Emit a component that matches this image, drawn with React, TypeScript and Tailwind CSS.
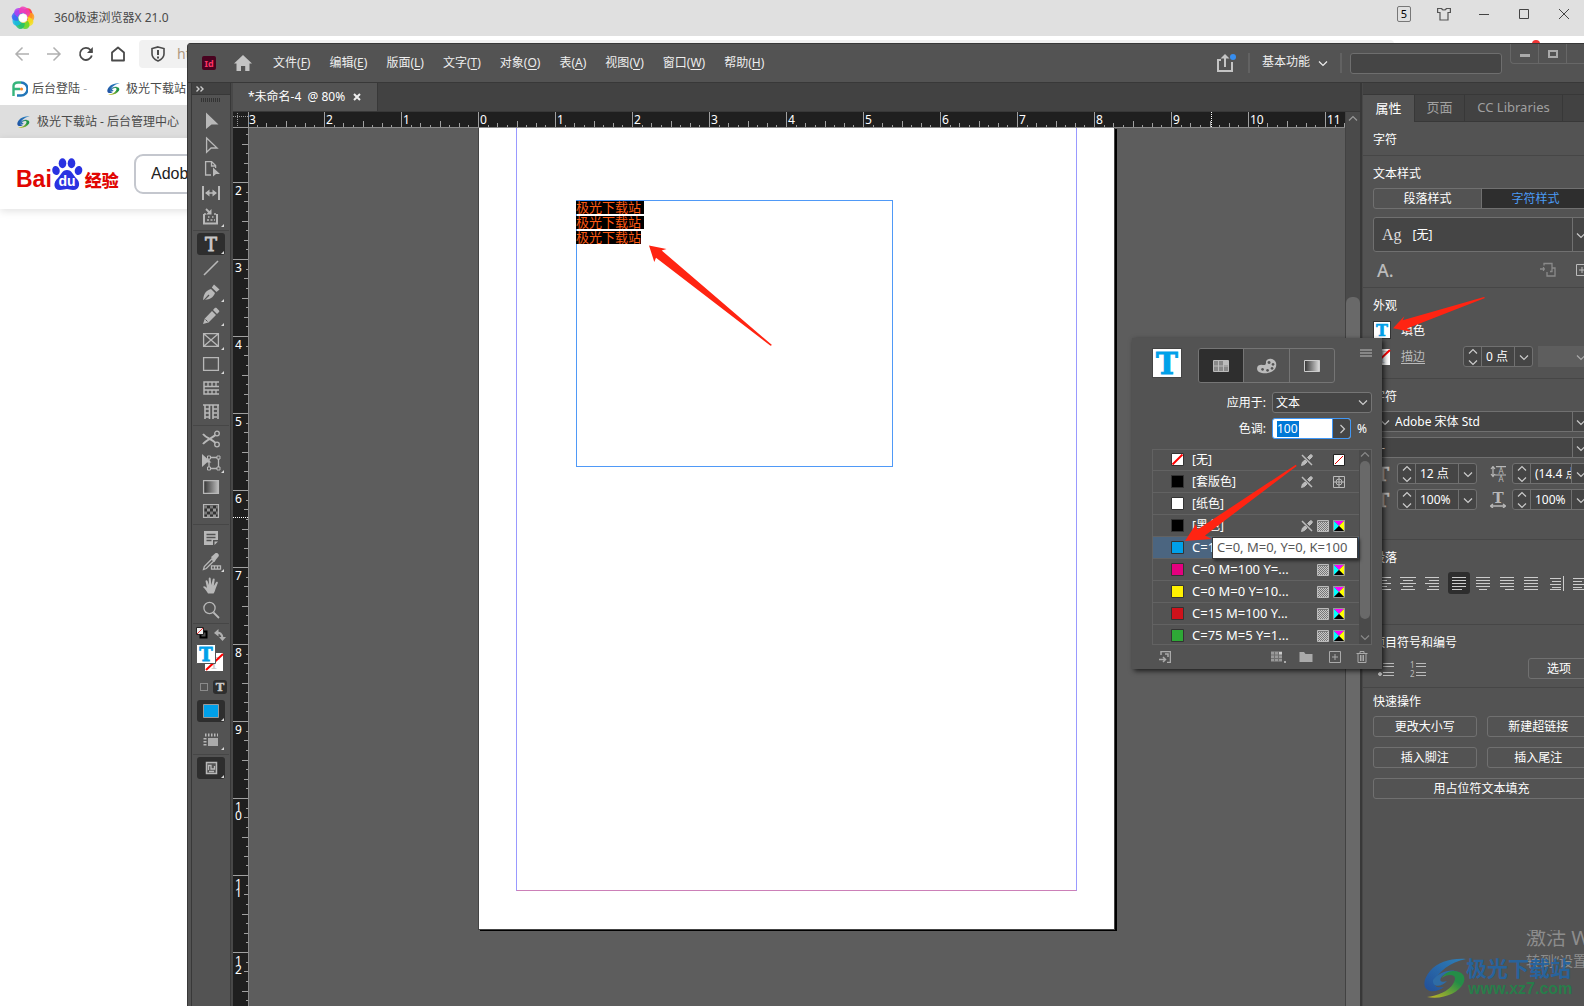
import type { ReactNode } from 'react'

const UNIT = 77

/* ---------- small shared pieces ---------- */

function Chevron({ dir = 'down', className = '' }: { dir?: 'down' | 'up' | 'right'; className?: string }) {
  const d = dir === 'down' ? 'M1 3.5l4 4 4-4' : dir === 'up' ? 'M1 6.5l4-4 4 4' : 'M3.5 1l4 4-4 4'
  return (
    <svg className={`h-[10px] w-[10px] shrink-0 ${className}`} viewBox="0 0 10 10" fill="none" stroke="currentColor" strokeWidth="1.2">
      <path d={d} />
    </svg>
  )
}

function SerifT({ className = '', size = 20, fill = '#b8b8b8' }: { className?: string; size?: number; fill?: string }) {
  return (
    <svg className={className} viewBox="0 0 20 20">
      <text x="10" y={10 + size * 0.365} fontSize={size} textAnchor="middle" fontWeight="bold" fill={fill} stroke={fill} strokeWidth="0.7" fontFamily='"DejaVu Serif", serif'>
        T
      </text>
    </svg>
  )
}

function Aurora({ className = '' }: { className?: string }) {
  return (
    <svg className={className} viewBox="0 0 42 40">
      <defs>
        <linearGradient id="auroraTop" x1="1" y1="0" x2="0" y2="1">
          <stop offset="0" stopColor="#2a86c4" />
          <stop offset="1" stopColor="#1f4fa0" />
        </linearGradient>
        <linearGradient id="auroraBottom" x1="1" y1="0" x2="0" y2="1">
          <stop offset="0.3" stopColor="#1f9446" />
          <stop offset="1" stopColor="#d8c51f" />
        </linearGradient>
      </defs>
      <path d="M42 1C27 0 14 4 6 13c-7 8-8 18 0 20 5 1 10-1 14-4-6 1-11 0-9-6C14 14 26 4 42 1z" fill="url(#auroraTop)" />
      <path d="M9 22c6-8 18-12 25-8-8-1-15 2-17 6-2 3 1 5 6 3-5 6-15 7-14-1z" fill="#2a6fb0" />
      <path d="M29 13c9 0 14 5 10 13C34 35 19 42 3 39c10-1 22-6 26-13 3-5 3-9-3-9-3 0-6 1-8 3 2-4 6-7 11-7z" fill="url(#auroraBottom)" />
    </svg>
  )
}

/* ---------- browser in the background ---------- */

function BrowserLogo() {
  const petals = ['#ff2d2d', '#ff9d1c', '#f3e01f', '#5ed62b', '#1fc06f', '#18b8e8', '#3a62f5', '#b43df0', '#f23bb5']
  return (
    <svg className="h-6 w-6" viewBox="0 0 24 24">
      {petals.map((color, i) => (
        <path key={color} d="M12 7C13 2 19 0 21 6c2 6-1 9-5 8 2-4 0-7-4-7z" fill={color} opacity="0.85" transform={`rotate(${i * 40} 12 12)`} />
      ))}
      <circle cx="12" cy="12" r="4" fill="#fff" />
    </svg>
  )
}

function BaiduLogo() {
  return (
    <a href="#baidu" className="flex items-end text-[#e10602]" aria-label="Baidu 经验">
      <span className="font-['Liberation_Sans',sans-serif] text-[23px] leading-[22px] font-bold">Bai</span>
      <svg className="-ml-px h-8 w-8" viewBox="0 0 32 32">
        <g fill="#2932e1">
          <ellipse cx="5" cy="12.500" rx="3.700" ry="4.600" transform="rotate(-15 5 12.500)" />
          <ellipse cx="11.500" cy="5.200" rx="3.800" ry="5" />
          <ellipse cx="20.500" cy="5.200" rx="3.800" ry="5" />
          <ellipse cx="27.500" cy="12.500" rx="3.700" ry="4.600" transform="rotate(15 27.500 12.500)" />
          <path d="M16 12c5 0 6 5 9 8 5 4 4 12-3 12-3 0-4-1-6-1s-4 1-7 1c-7 0-7-8-2-12 3-3 4-8 9-8z" />
        </g>
        <text x="16" y="28" fontSize="14" fontWeight="bold" textAnchor="middle" fill="#fff" fontFamily='"Liberation Sans", sans-serif'>
          du
        </text>
      </svg>
      <span className="pl-[2px] font-['Noto_Sans_CJK_SC',sans-serif] text-[17px] leading-5 font-black">经验</span>
    </a>
  )
}

function Browser() {
  return (
    <div className="text-[#4a4a4a]">
      <header className="flex h-9 items-center bg-[#e0e0e0] pr-[13px] pl-[11px]">
        <BrowserLogo />
        <span className="flex-1 pl-[19px]">360极速浏览器X 21.0</span>
        <div className="mb-2 flex items-center gap-[26px]">
          <button className="h-4 w-[14px] rounded-[2px] border border-[#777] text-[11px] leading-[14px] text-black">5</button>
          <button aria-label="皮肤">
            <svg className="h-[14px] w-[14px]" viewBox="0 0 14 14" fill="none" stroke="#555" strokeWidth="1.2">
              <path d="M.6 1.500h4c.5 2 4.300 2 4.800 0h4v4h-2.400v7.500H3V5.500H.6z" />
            </svg>
          </button>
          <button aria-label="最小化">
            <svg className="h-[14px] w-[14px]" viewBox="0 0 14 14" stroke="#444"><path d="M2 7.500h10" /></svg>
          </button>
          <button aria-label="最大化">
            <svg className="h-[14px] w-[14px]" viewBox="0 0 14 14" stroke="#444" fill="none"><path d="M2.500 2.500h9v9h-9z" /></svg>
          </button>
          <button aria-label="关闭">
            <svg className="h-[14px] w-[14px]" viewBox="0 0 14 14" stroke="#444"><path d="M2 2l10 10M12 2L2 12" /></svg>
          </button>
        </div>
      </header>

      <div className="flex h-9 items-center pl-[14px]">
        <div className="flex w-[125px] gap-4 text-[#4a4a4a]">
          <button aria-label="后退">
            <svg className="h-4 w-4" viewBox="0 0 16 16" fill="none" stroke="#b0b0b0" strokeWidth="1.5"><path d="M15 8H2M8.500 1.500L2 8l6.500 6.500" /></svg>
          </button>
          <button aria-label="前进">
            <svg className="h-4 w-4" viewBox="0 0 16 16" fill="none" stroke="#b0b0b0" strokeWidth="1.500"><path d="M1 8h13M7.500 1.500L14 8l-6.500 6.500" /></svg>
          </button>
          <button aria-label="刷新">
            <svg className="h-4 w-4" viewBox="0 0 16 16" fill="none" stroke="currentColor" strokeWidth="1.800"><path d="M13.800 9.500A6 6 0 1 1 12.500 4L14 6" /><path d="M14.800 1v6H9z" fill="currentColor" stroke="none" /></svg>
          </button>
          <button aria-label="主页">
            <svg className="h-4 w-4" viewBox="0 0 16 16" fill="none" stroke="currentColor" strokeWidth="1.800" strokeLinejoin="round"><path d="M2 6.500l6-5 6 5v8H2z" /></svg>
          </button>
        </div>
        <div className="mr-[190px] flex h-7 flex-1 items-center rounded bg-[#f1f1f1] pl-[11px]">
          <svg className="h-4 w-4" viewBox="0 0 16 16" fill="none" stroke="currentColor" strokeWidth="1.600">
            <path d="M8 .9l6 1.600v5.500c0 3.500-3 5.700-6 7-3-1.300-6-3.500-6-7V2.500z" />
            <path d="M8 4v5M8 10.500v2" strokeWidth="2" />
          </svg>
          <span className="pl-[11px] text-sm text-[#b09a80]">https://</span>
        </div>
      </div>

      <nav className="flex h-[33px] items-center pl-3 whitespace-nowrap">
        <a href="#login" className="flex w-[95px] items-center gap-1">
          <svg className="h-4 w-4" viewBox="0 0 16 16" fill="none" strokeWidth="2.400">
            <path d="M9 1.500H6C3 1.500 1.500 3 1.500 5v10M1.500 8H8" stroke="#35b57c" />
            <path d="M9 1.500a6.500 6.500 0 0 1 0 13H5" stroke="#2377b8" />
            <circle cx="9.500" cy="8" r="1.600" fill="#ef8a2c" />
          </svg>
          <span>后台登陆 <span className="text-[#aaa]">-</span></span>
        </a>
        <a href="#site" className="flex items-center gap-[6px]">
          <Aurora className="h-3 w-[13px]" />
          <span>极光下载站</span>
        </a>
      </nav>

      <div className="flex h-[33px] items-center gap-[7px] bg-[#dedede] pl-[17px]">
        <Aurora className="h-3 w-[13px]" />
        <span>极光下载站 - 后台管理中心</span>
      </div>

      <div className="flex h-[71px] items-center pl-4 shadow-[0_2px_8px_rgba(0,0,0,0.12)]">
        <div className="w-[118px]"><BaiduLogo /></div>
        <input
          aria-label="搜索"
          defaultValue="Adobe indesign"
          className="h-10 w-96 rounded-[9px] border-2 border-[#c4c7ce] pl-[15px] font-['Liberation_Sans',sans-serif] text-base text-[#222]"
        />
      </div>
    </div>
  )
}

/* ---------- menu bar ---------- */

const MENUS = [
  ['文件', 'F'],
  ['编辑', 'E'],
  ['版面', 'L'],
  ['文字', 'T'],
  ['对象', 'O'],
  ['表', 'A'],
  ['视图', 'V'],
  ['窗口', 'W'],
  ['帮助', 'H'],
]

function MenuBar() {
  return (
    <header className="flex h-10 shrink-0 items-center border-y border-[#383838] pl-[14px]">
      <span className="grid h-[14px] w-[14px] place-items-center rounded-[2px] bg-[#49021f] text-[9px] leading-none font-bold text-[#ff3366]">Id</span>
      <button aria-label="主页" className="ml-[18px]">
        <svg className="h-4 w-[18px]" viewBox="0 0 18 16" fill="#c4c4c4">
          <path d="M9 0l9 8.500h-2.500V16h-4.300v-5H7v5H2.500V8.500H0z" />
        </svg>
      </button>
      <nav className="flex flex-1 gap-[19px] pl-[21px] text-[#eee]">
        {MENUS.map(([label, key]) => (
          <button key={label} className="whitespace-nowrap">
            {label}(<span className="underline underline-offset-2">{key}</span>)
          </button>
        ))}
      </nav>
      <button aria-label="共享">
        <svg className="h-5 w-5" viewBox="0 0 20 20" fill="none" stroke="#c4c4c4" strokeWidth="2">
          <path d="M5 7H2v11h14V9M9 14V4" />
          <path d="M9 1l4.500 4.500h-9z" fill="#c4c4c4" stroke="none" />
          <circle cx="17" cy="4" r="3" fill="#378ef0" stroke="none" />
        </svg>
      </button>
      <div className="ml-3 h-5 w-[2px] bg-[#626262]" />
      <button className="flex items-center gap-2 px-3 pb-[2px] text-[#eee]">
        基本功能 <Chevron className="mt-[2px]" />
      </button>
      <div className="h-5 w-[2px] bg-[#626262]" />
      <input aria-label="搜索" className="ml-2 h-[21px] w-[152px] rounded-[3px] border border-[#6e6e6e] bg-[#454545]" />
      <div className="ml-2 flex h-5 self-start rounded-bl border-b border-l border-[#676767]">
        <button aria-label="最小化" className="grid w-7 place-items-center border-r border-[#676767]">
          <span className="mt-1 h-[3px] w-[10px] bg-[#aaa]" />
        </button>
        <button aria-label="还原" className="grid w-7 place-items-center border-r border-[#676767]">
          <span className="h-2 w-[10px] border-2 border-[#aaa]" />
        </button>
        <button aria-label="关闭" className="w-[33px]" />
      </div>
    </header>
  )
}

/* ---------- tool column ---------- */

interface ToolProps {
  label: string
  children: ReactNode
  more?: boolean
  active?: boolean
}

function Tool({ label, children, more, active }: ToolProps) {
  return (
    <button aria-label={label} className="grid h-6 w-full place-items-center text-[#b8b8b8]">
      <span className={`grid h-[22px] w-7 place-items-center rounded-[3px] ${active ? 'bg-[#2e2e2e]' : ''}`}>
        <svg className="h-[22px] w-7" viewBox="-2 1 28 22" fill="none" stroke="currentColor" strokeWidth="1.300">
          {children}
          {more && <path d="M25 19v3h-3z" fill="#d8d8d8" stroke="none" />}
        </svg>
      </span>
    </button>
  )
}

function Divider() {
  return <div className="mx-px my-px h-px bg-[#464646]" />
}

function ToolColumn() {
  return (
    <aside className="w-[39px] shrink-0 border-r border-[#383838]">
      <div className="flex h-3 items-center border-b border-[#383838] bg-[#424242] pl-1 text-[#ccc]">
        <svg className="h-[6px] w-2" viewBox="0 0 8 6" fill="none" stroke="currentColor" strokeWidth="1.400"><path d="M.5.5L3 3 .5 5.500M4.500.5L7 3 4.500 5.500" /></svg>
      </div>
      <div className="flex h-[14px] justify-center pt-[3px]">
        <svg className="h-1 w-5" viewBox="0 0 20 4" fill="none" stroke="#333" strokeWidth="4" strokeDasharray="1 1"><path d="M0 2h20" /></svg>
      </div>
      <Tool label="选择工具"><path d="M7 3.500L19.500 15.500H12.500L7 20z" fill="currentColor" stroke="none" /></Tool>
      <Tool label="直接选择工具"><path d="M7.600 5l10.500 10h-6L7.600 19.300z" /></Tool>
      <Tool label="页面工具">
        <path d="M12 18H6.600V4.600h6l4 4V11M12.500 4.600V9h4" />
        <path d="M14 10.500l7 6.500h-4l-3 2.500z" fill="currentColor" stroke="none" />
      </Tool>
      <Tool label="间隙工具">
        <path d="M4 5v14M20 5v14" strokeWidth="2" />
        <path d="M7 12h10" />
        <path d="M10.500 8.500v7L6 12zM13.500 8.500v7L18 12z" fill="currentColor" stroke="none" />
      </Tool>
      <Tool label="内容收集器工具" more>
        <path d="M5 9v9.500h13V9" strokeWidth="2" />
        <path d="M5 9h3M15 9h3M9 12h1.500M13 12h1.500M8 15h8" strokeWidth="1.600" strokeDasharray="2 1.500" />
        <path d="M7 4l4 4" strokeWidth="1.800" />
        <path d="M12.500 4v5.500H7z" fill="currentColor" stroke="none" />
      </Tool>
      <Divider />
      <Tool label="文字工具" more active>
        <text x="12" y="18.500" fontSize="18" textAnchor="middle" fill="#c8c8c8" stroke="#c8c8c8" strokeWidth="0.8" fontFamily='"DejaVu Serif", serif'>T</text>
      </Tool>
      <Tool label="直线工具"><path d="M5 19L19 5" strokeWidth="1.600" /></Tool>
      <Tool label="钢笔工具" more>
        <path d="M4 20c1-6 2-9 8-11l4 4c-2 5-5 6-10 7l4.500-4.500-1-1L5 19.500z" fill="currentColor" stroke="none" />
        <path d="M12.800 7.500L15 4.500l5.500 5-3 2.500z" fill="currentColor" stroke="none" />
      </Tool>
      <Tool label="铅笔工具" more>
        <path d="M4 20l1.800-5.500L13 7l4 4-7.500 7.500zM14 6l1.800-2c.5-.5 1.300-.5 1.800 0L20 6.400c.5.5.5 1.100 0 1.600L18 10z" fill="currentColor" stroke="none" />
        <path d="M6.500 15.500l2 2" stroke="#535353" strokeWidth="1" />
      </Tool>
      <Tool label="矩形框架工具" more><path d="M4.600 5.600h14.800v12.800H4.600zM5 6l14 12M19 6L5 18" /></Tool>
      <Tool label="矩形工具" more><path d="M4.600 5.600h14.800v12.800H4.600z" /></Tool>
      <Tool label="水平网格工具">
        <path d="M20 6H5v12h15M5 10.500h15M5 14h15" strokeWidth="1.500" />
        <path d="M9 6v4M13 6v4M17 6v4M9 14v4M13 14v4M17 14v4" />
      </Tool>
      <Tool label="垂直网格工具">
        <path d="M4 5h16M6 5v14M10.500 5v14M14 5v14M19 5v14" strokeWidth="1.600" />
        <path d="M6 9h4M6 13h4M6 17h4M14 9h4M14 13h4M14 17h4" />
      </Tool>
      <Divider />
      <Tool label="剪刀工具">
        <path d="M4 7c3 4 9 5 12.500 9M4 17c3-4 9-6 12.500-9" strokeWidth="2" />
        <circle cx="18" cy="6.500" r="2.300" />
        <circle cx="18" cy="17.500" r="2.300" />
      </Tool>
      <Tool label="自由变换工具" more>
        <path d="M10 6.500h9.500v11H10z" />
        <path d="M8.500 5h3v3h-3zM18 5h3v3h-3zM18 16h3v3h-3zM8.500 16h3v3h-3z" fill="#535353" strokeWidth="1" />
        <path d="M3 3l9.500 8.500H8l-5 4.500z" fill="currentColor" stroke="none" />
      </Tool>
      <Tool label="渐变色板工具">
        <defs><linearGradient id="toolGradient"><stop offset="0" stopColor="#333" /><stop offset="1" stopColor="#bbb" /></linearGradient></defs>
        <path d="M4.600 5.600h14.800v12.800H4.600z" fill="url(#toolGradient)" />
      </Tool>
      <Tool label="渐变羽化工具">
        <path d="M4.600 5.600h14.800v12.800H4.600z" fill="#333" />
        <path d="M5 8h14M5 14h14" strokeWidth="3" strokeDasharray="3 3" stroke="#7a7a7a" />
        <path d="M8 11h11M8 17h11" strokeWidth="3" strokeDasharray="3 3" stroke="#999" />
      </Tool>
      <Divider />
      <Tool label="附注工具">
        <path d="M5 5h14v9h-5v5H5zM19 15.500L15.500 19v-3.500z" fill="currentColor" stroke="none" />
        <path d="M7.500 8.500h9M7.500 11.500h9M7.500 14.500h5" stroke="#535353" />
      </Tool>
      <Tool label="吸管工具" more>
        <path d="M4.500 19.500l.8-3 7.500-7.500 2 2-7.500 7.500z" />
        <path d="M12 7l1.500-1.200L16 3.500c2-1.500 5 1 3.500 3L17 9.500 15.500 12z" fill="currentColor" stroke="none" />
        <path d="M12.500 15.800h9v3.400h-9zM15.500 16v3M18.500 16v3" />
      </Tool>
      <Tool label="抓手工具">
        <path d="M9 19.500c-1-2-3-4.500-5-6.500 1-1.500 2.500-.5 4 1L6.500 7c.3-1.300 1.700-1 2 0l1.500 4-.3-6.500c.3-1.200 1.700-1.200 2 0L12.300 11l1.500-6c.5-1 1.900-.7 1.900.5L14.800 12l2.400-4c.8-.8 2-.1 1.600 1l-2.300 6c-.6 2-1.200 3.500-2 4.500z" fill="currentColor" stroke="none" />
      </Tool>
      <Tool label="缩放工具">
        <circle cx="10.500" cy="10" r="5.600" />
        <path d="M14.500 14.500L20 20" strokeWidth="1.800" />
      </Tool>
      <Divider />

      {/* fill / stroke proxies */}
      <div className="flex h-4 items-center justify-between pr-1 pl-1">
        <button aria-label="默认填色和描边">
          <svg className="h-3 w-3" viewBox="0 0 12 12">
            <path d="M4.500 4.500h6v6h-6z" fill="none" stroke="#000" strokeWidth="2" />
            <path d="M.5.5h7v7h-7z" fill="#eee" stroke="#222" />
            <path d="M1 7l6-6" stroke="#e33" />
          </svg>
        </button>
        <button aria-label="互换填色和描边">
          <svg className="mt-1 h-3 w-3" viewBox="0 0 12 12" fill="none" stroke="#b0b0b0" strokeWidth="2">
            <path d="M2 4c4-1 6 1 6.500 5" />
            <path d="M4.500 0v7.500L0 4zM5 8h7l-3.500 4z" fill="#b0b0b0" stroke="none" />
          </svg>
        </button>
      </div>
      <div className="h-[34px] pt-[3px] pl-1">
        <svg className="h-7 w-7" viewBox="0 0 28 28">
          <path d="M9 9h18v18H9z" fill="#fff" />
          <text x="18" y="25" fontSize="17" textAnchor="middle" fill="#ccc" fontFamily='"DejaVu Serif", serif'>T</text>
          <path d="M10 26L27 10" stroke="#f00" strokeWidth="2" />
          <path d="M.5.5h19v19h-19z" fill="#fff" stroke="#555" strokeWidth="1" />
          <text x="10" y="16.500" fontSize="18" textAnchor="middle" fontWeight="bold" fill="#00a0e9" stroke="#00a0e9" strokeWidth="0.8" fontFamily='"DejaVu Serif", serif'>T</text>
        </svg>
      </div>
      <div className="flex h-6 items-center gap-[5px] pl-2">
        <button aria-label="格式针对容器" className="h-2 w-2 border border-[#8a8a8a]" />
        <button aria-label="格式针对文本" className="grid h-[14px] w-[14px] place-items-center rounded-[3px] bg-[#2e2e2e]">
          <SerifT className="h-3 w-3" size={19} fill="#ccc" />
        </button>
      </div>
      <Tool label="应用颜色" more active><path d="M4.500 5.500h15v13h-15z" fill="#00a0e9" stroke="#999" strokeWidth="1" /></Tool>
      <div className="grid h-[30px] items-end pb-px">
        <Tool label="视图选项" more>
          <path d="M9 10h10v8H9z" fill="#aaa" stroke="none" />
          <path d="M6 7h13" strokeWidth="3" strokeDasharray="1.500 1.500" />
          <path d="M6 10v9" strokeWidth="3" strokeDasharray="1.500 1.500" />
        </Tool>
      </div>
      <Divider />
      <Tool label="屏幕模式" more active>
        <path d="M7.500 6.500h10v11h-10z" fill="#555" strokeWidth="1.500" />
        <path d="M9.500 14V9.500H12V13h3.500V10M10 15.500h5" />
      </Tool>
    </aside>
  )
}

/* ---------- document ---------- */

const tickLength = (i: number) => (i % 8 === 0 ? 15 : i % 4 === 0 ? 6 : i % 2 === 0 ? 4 : 2)

function HorizontalRuler() {
  // the zero mark stands 229px from the left end
  const ticks = Array.from({ length: 115 }, (_, i) => i - 24)
  return (
    <svg className="h-4 w-full" fontFamily='"Noto Sans", sans-serif'>
      {ticks.map((i) => {
        const x = Math.round(229 + (i * UNIT) / 8) + 0.5
        return <path key={i} d={`M${x} 15v-${tickLength(i)}`} stroke="#a0a0a0" />
      })}
      {ticks.filter((i) => i % 8 === 0).map((i) => (
        <text key={i} x={231 + (i * UNIT) / 8} y="12" fontSize="12" fill="#fff">{Math.abs(i / 8)}</text>
      ))}
      <path d="M962.500 0v15" stroke="#fff" strokeDasharray="1 1" />
      <path d="M0 15.500h1200" stroke="#8a8a8a" />
    </svg>
  )
}

function VerticalRuler() {
  // the mark for 2 stands 54px from the top end
  const ticks = Array.from({ length: 100 }, (_, i) => i + 10)
  return (
    <svg className="w-4 shrink-0 bg-[#1f1f1f]" height="100%" fontFamily='"Noto Sans", sans-serif'>
      {ticks.map((i) => {
        const y = Math.round(54 + ((i - 16) * UNIT) / 8) + 0.5
        return <path key={i} d={`M15 ${y}h-${tickLength(i)}`} stroke="#a0a0a0" />
      })}
      {ticks.filter((i) => i % 8 === 0).map((i) =>
        String(i / 8).split('').map((digit, n) => (
          <text key={`${i}-${n}`} x="2" y={67 + ((i - 16) * UNIT) / 8 + n * 9} fontSize="12" fill="#fff">{digit}</text>
        )),
      )}
      <path d="M0 389.500h15" stroke="#fff" strokeDasharray="1 1" />
      <path d="M15.500 0v1200" stroke="#8a8a8a" />
    </svg>
  )
}

function Document() {
  return (
    <main className="flex min-w-0 flex-1 flex-col border-l-2 border-[#484848]">
      <div className="flex h-[29px] shrink-0 border-b border-[#383838] bg-[#424242]">
        <div className="flex w-[145px] items-center gap-2 border-r border-[#383838] bg-[#535353] pl-[15px] text-white">
          <span className="whitespace-pre">*未命名-4  @ 80%</span>
          <button aria-label="关闭文档">
            <svg className="h-2 w-2" viewBox="0 0 8 8" stroke="#eee" strokeWidth="2"><path d="M1 1l6 6M7 1L1 7" /></svg>
          </button>
        </div>
      </div>
      <div className="flex min-h-0 flex-1">
        <div className="flex min-w-0 flex-1 flex-col">
          <div className="flex h-4 shrink-0 bg-[#1f1f1f]">
            <svg className="h-4 w-4 shrink-0" viewBox="0 0 16 16" stroke="#999" strokeDasharray="1 1" fill="none">
              <path d="M4.500 1v14M0 4.500h15" />
              <path d="M15.500 0v16M0 15.500h16" strokeDasharray="none" />
            </svg>
            <HorizontalRuler />
          </div>
          <div className="flex min-h-0 flex-1">
            <VerticalRuler />
            <div className="relative min-w-0 flex-1 overflow-hidden bg-[#5d5d5d]">
              <div className="absolute top-0 left-[229px] h-[802px] w-[637px] border border-t-0 border-[#444] bg-white shadow-[2px_1px_0_#000]">
                <div className="absolute top-0 left-[37px] h-[763px] w-[561px] border-x border-b border-x-[#9999ff] border-b-[#cc80b8]" />
                <div className="absolute top-[72px] left-[97px] h-[267px] w-[317px] border border-[#4f99f7]">
                  <div className="-ml-px flex flex-col items-start gap-[2px] font-['Noto_Sans_CJK_SC',sans-serif] text-[13px] leading-[11px] text-[#ff5a14]">
                    <span className="bg-black pr-[3px] pb-[2px]">极光下载站</span>
                    <span className="bg-black pr-[3px] pb-[2px]">极光下载站</span>
                    <span className="bg-black pb-[2px]">极光下载站</span>
                  </div>
                </div>
              </div>
            </div>
          </div>
        </div>
        {/* vertical scroll bar */}
        <div className="flex w-[15px] flex-col border-l border-[#424242] bg-[#4a4a4a]">
          <Chevron dir="up" className="mt-[2px] ml-[2px] text-[#999]" />
          <div className="mt-[173px] flex-1 rounded-t-md bg-[#696969]" />
        </div>
      </div>
    </main>
  )
}

/* ---------- properties panel ---------- */

function Section({ title, children }: { title: string; children?: ReactNode }) {
  return (
    <section className="border-b border-[#464646] px-[10px] pt-[10px]">
      <h2 className="leading-4">{title}</h2>
      {children}
    </section>
  )
}

function PanelButton({ children, className = '' }: { children: ReactNode; className?: string }) {
  return <button className={`h-[21px] rounded-[3px] border border-[#707070] leading-4 ${className}`}>{children}</button>
}

function Stepper({ label, value, className = '' }: { label: string; value: string; className?: string }) {
  return (
    <div className={`flex h-[21px] rounded-[3px] border border-[#707070] bg-[#454545] text-[#ccc] ${className}`}>
      <button aria-label={`${label} 增减`} className="flex w-[18px] shrink-0 flex-col items-center justify-center border-r border-[#707070]">
        <Chevron dir="up" className="h-[9px]" />
        <Chevron className="h-[9px]" />
      </button>
      <input aria-label={label} defaultValue={value} className="min-w-0 flex-1 bg-transparent pl-1 text-white" />
      <button aria-label={`${label} 选项`} className="grid w-[18px] shrink-0 place-items-center border-l border-[#707070]">
        <Chevron />
      </button>
    </div>
  )
}

function FontField({ label, value, children }: { label: string; value: string; children?: ReactNode }) {
  return (
    <div className="flex h-[21px] rounded-[3px] border border-[#707070] bg-[#454545] pl-[7px] text-[#ccc]">
      {children}
      <input aria-label={label} defaultValue={value} className="min-w-0 flex-1 bg-transparent text-white" />
      <button aria-label={`${label} 选项`} className="grid w-[17px] place-items-center border-l border-[#707070]"><Chevron /></button>
    </div>
  )
}

const ALIGNMENTS = [
  { label: '左对齐', d: 'M1 1.500h14M1 4.500h10M1 7.500h14M1 10.500h10M1 13.500h14' },
  { label: '居中对齐', d: 'M0 1.500h16M3 4.500h10M0 7.500h16M3 10.500h10M1 13.500h14' },
  { label: '右对齐', d: 'M1 1.500h14M5 4.500h10M1 7.500h14M5 10.500h10M3 13.500h12' },
  { label: '双齐末行齐左', d: 'M1 1.500h14M1 4.500h14M1 7.500h14M1 10.500h14M1 13.500h10', active: true },
  { label: '双齐末行居中', d: 'M1 1.500h14M1 4.500h14M1 7.500h14M1 10.500h14M4 13.500h8' },
  { label: '双齐末行齐右', d: 'M1 1.500h14M1 4.500h14M1 7.500h14M1 10.500h14M6 13.500h9' },
  { label: '全部强制双齐', d: 'M1 1.500h14M1 4.500h14M1 7.500h14M1 10.500h14M1 13.500h14' },
  { label: '朝向书脊对齐', d: 'M2 2.500h11M4 5.500h9M2 8.500h11M4 11.500h9M2 13.500h11M15.500 0v15', spaced: true },
  { label: '背向书脊对齐', d: 'M1 2.500h11M1 5.500h9M1 8.500h11M1 11.500h9M1 13.500h11' },
]

function PropertiesPanel() {
  return (
    <aside className="w-[240px] shrink-0 border-l-2 border-[#383838] text-white">
      <div className="h-full border-l border-[#484848]">
        <div className="h-3 border-b border-[#383838] bg-[#424242]" />
        <div className="flex h-[27px] bg-[#424242] text-[13px] text-[#a0a0a0]" role="tablist">
          <button role="tab" className="w-[51px] bg-[#535353] text-white">属性</button>
          <button role="tab" className="w-[51px] border-x border-b border-[#383838]">页面</button>
          <button role="tab" className="w-[98px] border-r border-b border-[#383838]">CC Libraries</button>
          <span className="flex-1 border-b border-[#383838]" />
        </div>

        <h2 className="border-b border-[#464646] px-[10px] pt-[10px] pb-[7px] leading-4">字符</h2>

        <Section title="文本样式">
          <div className="mt-[6px] flex h-[21px] overflow-hidden rounded-[3px] border border-[#707070]">
            <button className="flex-1 border-r border-[#707070] leading-4">段落样式</button>
            <button className="flex-1 bg-[#2e2e2e] leading-4 text-[#4b9bf5]">字符样式</button>
          </div>
          <button className="mt-2 flex h-[35px] w-full items-center rounded-[3px] border border-[#707070] bg-[#454545] pl-2">
            <span className="font-['Liberation_Serif',serif] text-base text-[#ddd]">Ag</span>
            <span className="flex-1 pl-[11px] text-left">[无]</span>
            <span className="grid h-full w-[17px] place-items-center border-l border-[#707070] text-[#ccc]"><Chevron /></span>
          </button>
          <div className="flex h-[35px] items-center text-[#bbb]">
            <button aria-label="字符选项" className="flex-1 pl-1 text-left text-lg leading-4 font-medium">A.</button>
            <button aria-label="重新定义样式">
              <svg className="h-4 w-4" viewBox="0 0 16 16" fill="none" stroke="#8a8a8a" strokeWidth="1.300">
                <path d="M0 7h5M3.500 5v4M4 3.500v-2h8v8h-2M7 10v4h8V6h-3" />
              </svg>
            </button>
            <button aria-label="新建样式" className="mr-[2px] ml-5">
              <svg className="h-3 w-3" viewBox="0 0 12 12" fill="none" stroke="#bbb"><path d="M.5.5h11v11H.5zM3 6h6M6 3v6" /></svg>
            </button>
          </div>
        </Section>

        <Section title="外观">
          <div className="mt-[7px] flex h-[18px] items-center gap-[10px]">
            <button aria-label="填色" className="h-[18px] w-[18px] border border-[#333] bg-white">
              <SerifT className="h-4 w-4" size={20} fill="#00a0e9" />
            </button>
            <span className="pt-[2px]">填色</span>
          </div>
          <div className="mt-[7px] flex items-center pb-[11px]">
            <svg className="h-[18px] w-[18px]" viewBox="0 0 18 18">
              <path d="M1 1h16v16H1z" fill="#fff" />
              <text x="9" y="15" fontSize="16" textAnchor="middle" fill="#ccc" fontFamily='"DejaVu Serif", serif'>T</text>
              <path d="M1 17L17 2" stroke="#f00" strokeWidth="2" />
            </svg>
            <a href="#stroke" className="ml-[10px] w-[62px] text-[#bbb] underline underline-offset-2">描边</a>
            <Stepper label="描边粗细" value="0 点" className="w-[70px]" />
            <div className="ml-[5px] flex h-[21px] flex-1 items-center justify-end bg-[#5e5e5e] pr-1 text-[#aaa]"><Chevron /></div>
          </div>
        </Section>

        <Section title="字符">
          <div className="mt-[6px] flex flex-col gap-[5px] pb-[29px]">
            <FontField label="字体" value="Adobe 宋体 Std">
              <Chevron className="mt-[5px] mr-[5px] -ml-px box-content" />
            </FontField>
            <FontField label="字体样式" value="-" />
            <div className="flex items-center">
              <span className="w-6"><SerifT className="h-[18px] w-[18px]" size={21} /></span>
              <Stepper label="字体大小" value="12 点" className="w-20" />
              <svg className="mr-[6px] ml-[13px] h-4 w-4 shrink-0" viewBox="0 0 16 16" fill="none" stroke="#b8b8b8" strokeWidth="1.200">
                <path d="M3 1v9M1 3l2-2.500L5 3M1 8l2 2.500L5 8M6 .6h10M5 9h11" />
                <text x="11" y="8" fontSize="8" textAnchor="middle" fill="#b8b8b8" stroke="none">A</text>
                <text x="11" y="16" fontSize="8" textAnchor="middle" fill="#b8b8b8" stroke="none">A</text>
              </svg>
              <Stepper label="行距" value="(14.4 点)" className="min-w-0 flex-1" />
            </div>
            <div className="flex items-center">
              <span className="w-6"><SerifT className="h-[18px] w-[18px]" size={21} /></span>
              <Stepper label="垂直缩放" value="100%" className="w-20" />
              <svg className="mr-[6px] ml-[13px] h-4 w-4 shrink-0" viewBox="0 0 16 16" fill="none" stroke="#b8b8b8" strokeWidth="1.300">
                <text x="8" y="11" fontSize="15" fontWeight="bold" textAnchor="middle" fill="#b8b8b8" stroke="none" fontFamily='"DejaVu Serif", serif'>T</text>
                <path d="M1 14h14M3 12l-2.500 2L3 16M13 12l2.500 2-2.500 2" />
              </svg>
              <Stepper label="水平缩放" value="100%" className="min-w-0 flex-1" />
            </div>
          </div>
        </Section>

        <Section title="段落">
          <div className="mt-[6px] flex gap-[2px] pb-[30px]">
            {ALIGNMENTS.map((a) => (
              <button
                key={a.label}
                aria-label={a.label}
                className={`grid h-[22px] w-[22px] shrink-0 place-items-center rounded-[3px] ${a.active ? 'ml-[3px] bg-[#2e2e2e]' : ''} ${a.spaced ? 'ml-px' : ''}`}
              >
                <svg className="h-[15px] w-4" viewBox="0 0 16 15" stroke="#ccc"><path d={a.d} /></svg>
              </button>
            ))}
          </div>
        </Section>

        <Section title="项目符号和编号">
          <div className="mt-[7px] flex items-center pb-2">
            <button aria-label="项目符号列表" className="ml-[5px]">
              <svg className="h-4 w-4" viewBox="0 0 16 16" stroke="#bbb">
                <path d="M5 2.500h11M5 5.500h11M5 11.500h11M5 14.500h11" />
                <circle cx="2" cy="13" r="1.500" fill="#bbb" />
              </svg>
            </button>
            <button aria-label="编号列表" className="ml-4">
              <svg className="h-4 w-4" viewBox="0 0 16 16" stroke="#bbb">
                <path d="M6 2.500h10M6 5.500h10M6 11.500h10M6 14.500h10" />
                <text x="0" y="7" fontSize="8" fill="#bbb" stroke="none">1</text>
                <text x="0" y="16" fontSize="8" fill="#bbb" stroke="none">2</text>
              </svg>
            </button>
            <PanelButton className="ml-auto w-[62px]">选项</PanelButton>
          </div>
        </Section>

        <section className="px-[10px] pt-[6px]">
          <h2 className="leading-4">快速操作</h2>
          <div className="mt-[6px] grid grid-cols-2 gap-[10px]">
            <PanelButton>更改大小写</PanelButton>
            <PanelButton>新建超链接</PanelButton>
            <PanelButton>插入脚注</PanelButton>
            <PanelButton>插入尾注</PanelButton>
            <PanelButton className="col-span-2">用占位符文本填充</PanelButton>
          </div>
        </section>
      </div>
    </aside>
  )
}

/* ---------- swatches pop-up ---------- */

interface Swatch {
  name: string
  color: string
  locked?: boolean
  kind?: 'none' | 'registration' | 'cmyk'
  selected?: boolean
}

const SWATCHES: Swatch[] = [
  { name: '[无]', color: 'none', locked: true, kind: 'none' },
  { name: '[套版色]', color: '#000000', locked: true, kind: 'registration' },
  { name: '[纸色]', color: '#ffffff' },
  { name: '[黑色]', color: '#000000', locked: true, kind: 'cmyk' },
  { name: 'C=100 M=0 Y=...', color: '#00a0e9', kind: 'cmyk', selected: true },
  { name: 'C=0 M=100 Y=...', color: '#e4007f', kind: 'cmyk' },
  { name: 'C=0 M=0 Y=10...', color: '#fff100', kind: 'cmyk' },
  { name: 'C=15 M=100 Y...', color: '#cf121b', kind: 'cmyk' },
  { name: 'C=75 M=5 Y=1...', color: '#2ea836', kind: 'cmyk' },
]

function SwatchRow({ swatch }: { swatch: Swatch }) {
  const { name, color, locked, kind, selected } = swatch
  return (
    <li>
      <button className={`flex h-[22px] w-full items-center border-b border-[#626262] pr-[14px] pl-[18px] ${selected ? 'bg-[#4b6580]' : ''}`}>
        <svg className="h-[13px] w-[13px] shrink-0" viewBox="0 0 13 13">
          <path d="M.5.5h12v12H.5z" fill={color === 'none' ? '#fff' : color} stroke="#333" />
          {color === 'none' && <path d="M1.500 11.500l10-10" stroke="#f00" strokeWidth="2" />}
        </svg>
        <span className={`flex-1 pl-2 text-left whitespace-nowrap ${name.startsWith('[') ? 'text-xs' : 'text-[13px]'}`}>{name}</span>
        {locked && (
          <svg className="h-3 w-3 shrink-0" viewBox="0 0 12 12" fill="none" stroke="#bbb">
            <path d="M.5 11.500l1-3.500L4 6l2 2-2.500 2.500zM6.500 3.500L9 1c1.500-1 3 .5 2 2L8.500 5.500z" fill="#bbb" />
            <path d="M1 1l10 10" strokeWidth="1.500" />
          </svg>
        )}
        <span className="ml-1 w-3 shrink-0">
          {kind === 'cmyk' && (
            <svg className="h-3 w-3" viewBox="0 0 12 12">
              <path d="M.5.5h11v11H.5z" fill="#777" stroke="#bbb" />
              <path d="M2 2.500h9M1 3.500h9M2 4.500h9M1 5.500h9M2 6.500h9M1 7.500h9M2 8.500h9M1 9.500h9M2 10.500h9" stroke="#c8c8c8" strokeDasharray="1 1" />
            </svg>
          )}
        </span>
        <svg className="ml-1 h-3 w-3 shrink-0" viewBox="0 0 12 12">
          {kind === 'cmyk' && (
            <>
              <path d="M0 0h12L6 6z" fill="#f0f" />
              <path d="M0 0l6 6-6 6z" fill="#0ff" />
              <path d="M12 0v12L6 6z" fill="#ff0" />
              <path d="M0 12l6-6 6 6z" fill="#000" />
              <path d="M.5.5h11v11H.5z" fill="none" stroke="#999" />
            </>
          )}
          {kind === 'none' && <path d="M.5.5h11v11H.5z" fill="#fff" stroke="#222" />}
          {kind === 'none' && <path d="M2 10l8-8" stroke="#e00" />}
          {kind === 'registration' && (
            <g fill="none" stroke="#bbb"><path d="M.5.5h11v11H.5zM1 6h10M6 1v10" /><circle cx="6" cy="6" r="3" /></g>
          )}
        </svg>
      </button>
    </li>
  )
}

function SwatchPopup() {
  return (
    <div className="absolute top-[338px] right-[202px] w-[250px] bg-[#535353] pt-[10px] pr-[10px] pb-[3px] pl-5 text-white shadow-[2px_2px_5px_rgba(0,0,0,0.7)]">
      <div className="flex items-start">
        <div className="mr-4 h-[30px] w-[30px] border border-[#444] bg-white">
          <SerifT className="h-7 w-7" size={21} fill="#00a0e9" />
        </div>
        <div className="flex h-[35px] overflow-hidden rounded-[3px] border border-[#757575]">
          <button aria-label="色板" className="grid w-11 place-items-center bg-[#2e2e2e]">
            <svg className="h-3 w-4" viewBox="0 0 16 12"><path d="M.5.5h15v11H.5z" fill="#888" stroke="#bbb" /><path d="M1 6h15M5.500 0v12M10.500 0v12" stroke="#bbb" /><path d="M11 1h4v4h-4z" fill="#bbb" /></svg>
          </button>
          <button aria-label="颜色" className="grid w-[47px] place-items-center border-x border-[#757575]">
            <svg className="h-4 w-5" viewBox="0 0 20 16" fill="#bbb">
              <path fillRule="evenodd" d="M9 3.500C10 .5 14 0 17 2c3 2 3 7 0 10-4 4-11 4-15 2-2.500-1.500-2.500-5-.5-6.500S6 7 7.500 7 9 5 9 3.500zM12 3a1.500 1.500 0 1 0 .1 0zM16 5a1.400 1.400 0 1 0 .1 0zM15 9a1.400 1.400 0 1 0 .1 0zM10.500 11a1.400 1.400 0 1 0 .1 0zM5.500 10a1.400 1.400 0 1 0 .1 0z" />
            </svg>
          </button>
          <button aria-label="渐变" className="grid w-11 place-items-center">
            <svg className="h-3 w-4" viewBox="0 0 16 12">
              <defs><linearGradient id="popupGradient"><stop offset="0" stopColor="#333" /><stop offset="1" stopColor="#ddd" /></linearGradient></defs>
              <path d="M.5.5h15v11H.5z" fill="url(#popupGradient)" stroke="#ccc" />
            </svg>
          </button>
        </div>
        <button aria-label="面板菜单" className="ml-auto">
          <svg className="h-[10px] w-3" viewBox="0 0 12 10" stroke="#999" strokeWidth="1.500"><path d="M0 2h12M0 5h12M0 8h12" /></svg>
        </button>
      </div>

      <div className="mt-[9px] flex items-center justify-end">
        <label htmlFor="applyTo" className="pr-[6px]">应用于:</label>
        <div className="relative">
          <select id="applyTo" className="h-[21px] w-[100px] appearance-none rounded-[3px] border border-[#757575] bg-[#454545] pl-[3px]">
            <option>文本</option>
          </select>
          <Chevron className="pointer-events-none absolute top-[5px] right-1 text-[#ccc]" />
        </div>
      </div>
      <div className="mt-[5px] flex items-center">
        <label htmlFor="tint" className="flex-1 pr-[6px] text-right">色调:</label>
        <div className="flex h-[21px] w-[79px] items-center overflow-hidden rounded-[3px] border border-[#3f97f6] bg-white">
          <input id="tint" defaultValue="100" className="ml-1 h-4 w-[22px] bg-[#0078d7] text-white" />
          <button aria-label="色调滑块" className="ml-auto grid h-full w-[18px] place-items-center border-l border-[#3f97f6] bg-[#454545] text-[#ccc]"><Chevron dir="right" className="h-2 w-2" /></button>
        </div>
        <span className="w-[21px] pl-[6px]">%</span>
      </div>

      <div className="mt-[10px] flex h-[196px] overflow-hidden border border-[#626262]">
        <ul className="-mt-px flex-1">
          {SWATCHES.map((swatch) => <SwatchRow key={swatch.name} swatch={swatch} />)}
        </ul>
        <div className="flex w-3 flex-col items-center bg-[#4a4a4a] text-[#888]">
          <Chevron dir="up" />
          <div className="my-px w-[10px] flex-1 rounded-full bg-[#696969]" />
          <div className="h-6 pt-3"><Chevron /></div>
        </div>
      </div>

      <div className="mt-[3px] flex h-[18px] items-center pr-1 pl-[7px] text-[#aaa]">
        <button aria-label="添加到库">
          <svg className="h-3 w-3" viewBox="0 0 12 12" fill="none" stroke="currentColor"><path d="M2 4V.5h9.500v11H8M0 8.500h6M4 6l2.500 2.500L4 11M6 3h3v3" strokeWidth="1.500" /></svg>
        </button>
        <button aria-label="色板视图" className="ml-auto">
          <svg className="h-3 w-4" viewBox="0 0 16 12"><path d="M0 .5h11v10H0z" fill="#999" /><path d="M7 1h4v3H7z" fill="#ccc" /><path d="M0 4h11M0 7.500h11M3.500 0v11M7.500 0v11" stroke="#707070" /><path d="M13 10h2v2h-2z" fill="#aaa" /></svg>
        </button>
        <button aria-label="新建颜色组" className="ml-3">
          <svg className="h-3 w-[14px]" viewBox="0 0 14 12" fill="currentColor"><path d="M.5 1H5l1.500 2h7v8H.5z" /></svg>
        </button>
        <button aria-label="新建色板" className="ml-4">
          <svg className="h-3 w-3" viewBox="0 0 12 12" fill="none" stroke="currentColor"><path d="M.5.5h11v11H.5zM3 6h6M6 3v6" /></svg>
        </button>
        <button aria-label="删除色板" className="ml-[15px]">
          <svg className="h-3 w-3" viewBox="0 0 12 12" fill="none" stroke="currentColor"><path d="M.5 2.500h11M4 2V.5h4V2M2 3v8.500h8V3M4.500 4v6M6 4v6M7.500 4v6" /></svg>
        </button>
      </div>

      {/* tooltip of the hovered swatch */}
      <div role="tooltip" className="absolute top-[199px] left-20 h-[22px] w-[146px] border border-[#3a3a3a] bg-white pl-1 text-[13px] leading-[19px] whitespace-nowrap text-[#575757] shadow-[2px_2px_3px_rgba(0,0,0,0.5)]">
        C=0, M=0, Y=0, K=100
      </div>
    </div>
  )
}

/* ---------- overlays ---------- */

function Arrows() {
  return (
    <svg className="pointer-events-none absolute inset-0 h-full w-full" fill="#ff2412">
      <path d="M649 245.500L666.500 249 661.700 250.500 772 345 770.500 345.800 656 257.700 654.300 262z" />
      <path d="M1393 328.300L1404.300 316.300 1402.700 320.300 1484 297 1485 298 1407 328.500 1412 332z" />
      <path d="M1185 541L1196 524 1197.500 529.500 1295.700 464.700 1296.700 466 1205 535.500 1211.700 539z" />
    </svg>
  )
}

function Watermark() {
  return (
    <div className="pointer-events-none absolute right-0 bottom-0 h-[76px] w-[160px] overflow-hidden whitespace-nowrap">
      <div className="pl-[102px] text-[#8d8d8d]">
        <p className="text-xl leading-4">激活 Windows</p>
        <p className="pt-[7px] text-sm leading-4">转到“设置”以激活</p>
      </div>
      <div className="absolute bottom-2 left-0 flex items-end opacity-90">
        <Aurora className="h-10 w-[42px]" />
        <div>
          <p className="text-[21px] leading-6 font-bold text-[#2465a5]">极光下载站</p>
          <p className="pl-[2px] font-['Liberation_Sans',sans-serif] text-base leading-[18px] font-bold text-[#24824a]">www.xz7.com</p>
        </div>
      </div>
    </div>
  )
}

export default function App() {
  return (
    <div className="relative h-screen overflow-hidden bg-white font-['Noto_Sans','Noto_Sans_CJK_SC',sans-serif] text-xs">
      <Browser />
      <span className="absolute top-10 right-11 h-2 w-2 rounded-full bg-[#f03434]" />

      <div className="absolute top-[43px] -right-4 bottom-0 left-[187px] flex flex-col overflow-hidden rounded-tl border-l border-[#383838] bg-[#535353]">
        <MenuBar />
        <div className="flex min-h-0 flex-1 pl-[3px]">
          <div className="flex min-w-0 flex-1 border-l border-[#383838]">
            <ToolColumn />
            <Document />
            <PropertiesPanel />
          </div>
        </div>
      </div>

      <SwatchPopup />
      <Arrows />
      <Watermark />
    </div>
  )
}
